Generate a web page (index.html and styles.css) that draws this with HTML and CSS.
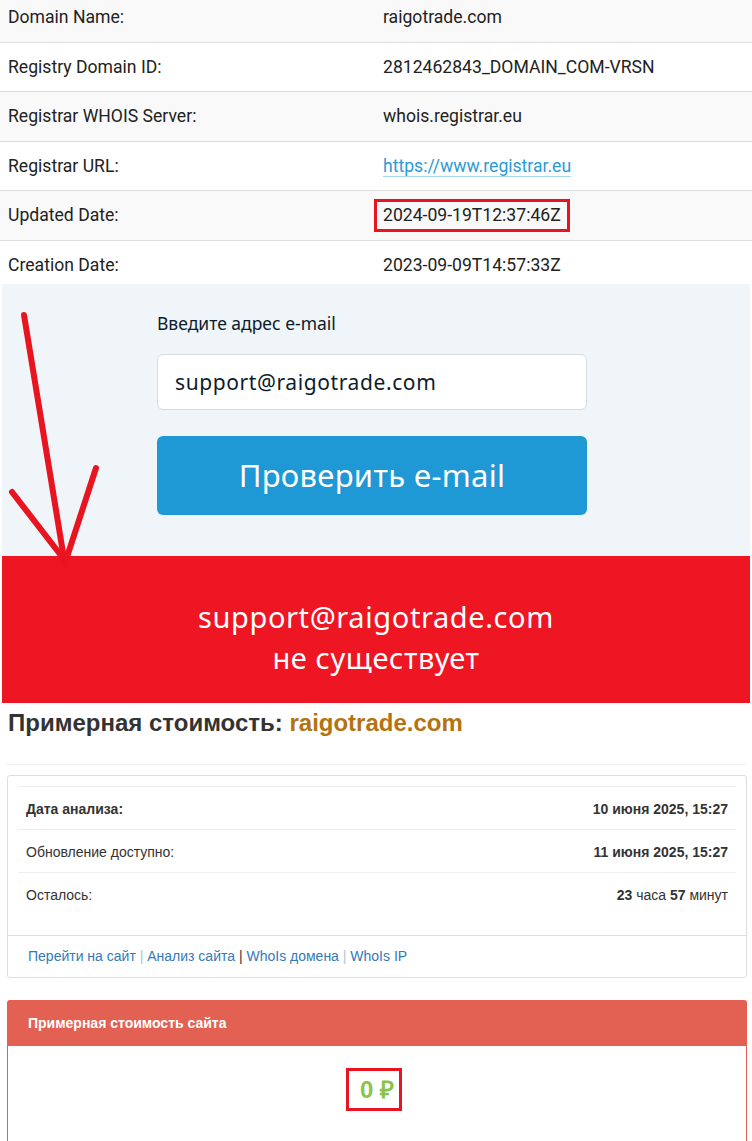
FILE: index.html
```html
<!DOCTYPE html>
<html lang="ru">
<head>
    <meta charset="UTF-8">
    <meta name="viewport" content="width=device-width, initial-scale=1.0">
    <title>raigotrade.com</title>
    <link rel="stylesheet" href="styles.css">
</head>
<body>
    <div class="page">
        <table class="whois">
            <tr><td>Domain Name:</td><td>raigotrade.com</td></tr>
            <tr><td>Registry Domain ID:</td><td>2812462843_DOMAIN_COM-VRSN</td></tr>
            <tr><td>Registrar WHOIS Server:</td><td>whois.registrar.eu</td></tr>
            <tr><td>Registrar URL:</td><td><a href="#">https://www.registrar.eu</a></td></tr>
            <tr><td>Updated Date:</td><td><span class="mark">2024-09-19T12:37:46Z</span></td></tr>
            <tr><td>Creation Date:</td><td>2023-09-09T14:57:33Z</td></tr>
        </table>

        <section class="check">
            <form class="check-form">
                <label for="email">Введите адрес e-mail</label>
                <input type="text" id="email" value="support@raigotrade.com">
                <button type="button">Проверить e-mail</button>
            </form>
        </section>

        <div class="verdict">
            <p>support@raigotrade.com<br>не существует</p>
        </div>

        <!-- стрелка, нарисованная поверх скриншота -->
        <svg class="arrow" width="110" height="290" viewBox="0 0 110 290">
            <g stroke="#e8141f" stroke-width="6" stroke-linecap="round" fill="none">
                <path d="M24 33 L65 283"/>
                <path d="M12 210 L63 276"/>
                <path d="M96 186 L66 278"/>
            </g>
        </svg>

        <h2 class="cost-title">Примерная стоимость: <span>raigotrade.com</span></h2>

        <div class="panel">
            <table class="info">
                <tr><td class="strong">Дата анализа:</td><td><b>10 июня 2025, 15:27</b></td></tr>
                <tr><td>Обновление доступно:</td><td><b>11 июня 2025, 15:27</b></td></tr>
                <tr><td>Осталось:</td><td><b>23</b> часа <b>57</b> минут</td></tr>
            </table>
            <div class="panel-links">
                <a href="#">Перейти на сайт</a> <span class="sep">|</span>
                <a href="#">Анализ сайта</a> | <a href="#">WhoIs домена</a> <span class="sep">|</span>
                <a href="#">WhoIs IP</a>
            </div>
        </div>

        <div class="panel panel-red">
            <div class="panel-heading">Примерная стоимость сайта</div>
            <div class="panel-body">
                <span class="price">0 ₽</span>
            </div>
        </div>
    </div>
</body>
</html>
```

FILE: styles.css
```css
:root {
    --text-color: #222222;
    --line-color: #dddddd;
    --stripe: #f9f9f9;
    --link-color: #2a9bd6;
    --check-bg: #eff5f9;
    --blue: #1f98d6;
    --red: #ee1622;
    --salmon: #e36152;
}

* {
    margin: 0;
    padding: 0;
    box-sizing: border-box;
}

body {
    font-family: Roboto, "Liberation Sans", Arial, sans-serif;
    color: var(--text-color);
    background-color: #ffffff;
}

.page {
    position: relative;
    width: 752px;
    overflow: hidden;
}

/* whois */

.whois {
    width: 100%;
    border-collapse: collapse;
    font-size: 17.6px;
    line-height: 24px;
}

.whois td {
    padding: 12px 8px 12.5px;
    border-bottom: 1px solid var(--line-color);
    vertical-align: top;
}

.whois td:first-child {
    width: 375px;
}

.whois tr:nth-child(odd) {
    background-color: var(--stripe);
}

.whois tr:first-child td {
    padding-top: 5px;
}

.whois tr:last-child td {
    border-bottom: none;
    padding-bottom: 7px;
}

.whois a {
    color: var(--link-color);
    text-decoration: none;
    border-bottom: 1px solid #a9d7ef;
}

.mark {
    display: inline-block;
    margin: -4px -9px -5px;
    padding: 1px 6px 2px;
    border: 3px solid #e8141f;
}

/* проверка e-mail */

.check {
    margin: 0 2px;
    padding: 27px 0 41px 155px;
    background-color: var(--check-bg);
    font-family: "Noto Sans", "Open Sans", sans-serif;
}

.check-form {
    display: flex;
    flex-direction: column;
    width: 430px;
}

.check-form label {
    font-size: 17.5px;
    line-height: 24px;
    color: #0d1c2a;
    margin-bottom: 19px;
}

.check-form input {
    height: 56px;
    padding: 0 17px;
    border: 1px solid #d8dcdf;
    border-radius: 6px;
    background-color: #ffffff;
    font-family: inherit;
    font-size: 21px;
    letter-spacing: 0.6px;
    color: #0d1c2a;
    margin-bottom: 26px;
}

.check-form button {
    height: 79px;
    border: none;
    border-radius: 6px;
    background-color: var(--blue);
    color: #ffffff;
    font-family: inherit;
    font-size: 31px;
    letter-spacing: 0.3px;
    cursor: pointer;
}

.verdict {
    margin: 0 2px;
    height: 147px;
    display: flex;
    align-items: center;
    justify-content: center;
    background-color: var(--red);
    color: #ffffff;
    font-family: "Noto Sans", "Open Sans", sans-serif;
    font-size: 29px;
    letter-spacing: 0.6px;
    line-height: 41px;
    text-align: center;
    padding-top: 16px;
}

.arrow {
    position: absolute;
    left: 0;
    top: 282px;
}

/* стоимость */

.cost-title {
    margin: 0 7px;
    padding: 7px 0 28px 1px;
    border-bottom: 1px solid #eeeeee;
    font-family: "Liberation Sans", Arial, sans-serif;
    font-size: 24px;
    line-height: 26px;
    color: #333333;
}

.cost-title span {
    color: #b5720f;
}

.panel {
    margin: 10px 5px 0 7px;
    border: 1px solid var(--line-color);
    border-radius: 3px;
    font-family: "Liberation Sans", Arial, sans-serif;
    font-size: 14px;
    color: #333333;
}

.info {
    width: calc(100% - 20px);
    margin: 10px 10px 20px;
    border-collapse: collapse;
}

.info td {
    padding: 12px 8px 10px;
    border-top: 1px solid #eeeeee;
    line-height: 20px;
}

.info td:last-child {
    text-align: right;
}

.info .strong {
    font-weight: bold;
    color: #333333;
}

.panel-links {
    padding: 10px 20px 11px;
    border-top: 1px solid var(--line-color);
    line-height: 20px;
    color: #333333;
}

.panel-links a {
    color: #337ab7;
    text-decoration: none;
}

.panel-links .sep {
    color: #a8c6e0;
}

.panel-red {
    margin-top: 22px;
    border-color: var(--salmon);
    border-bottom: none;
    border-radius: 3px 3px 0 0;
}

.panel-heading {
    padding: 13px 20px 14px;
    background-color: var(--salmon);
    color: #ffffff;
    font-weight: bold;
    line-height: 18px;
}

.panel-body {
    height: 96px;
    padding: 22px 6px 0 0;
    text-align: center;
}

.price {
    display: inline-block;
    padding: 3px 5px 3px 11px;
    border: 3px solid #e8141f;
    color: #8bc34a;
    font-size: 24px;
    font-weight: bold;
    line-height: 31px;
}
```
